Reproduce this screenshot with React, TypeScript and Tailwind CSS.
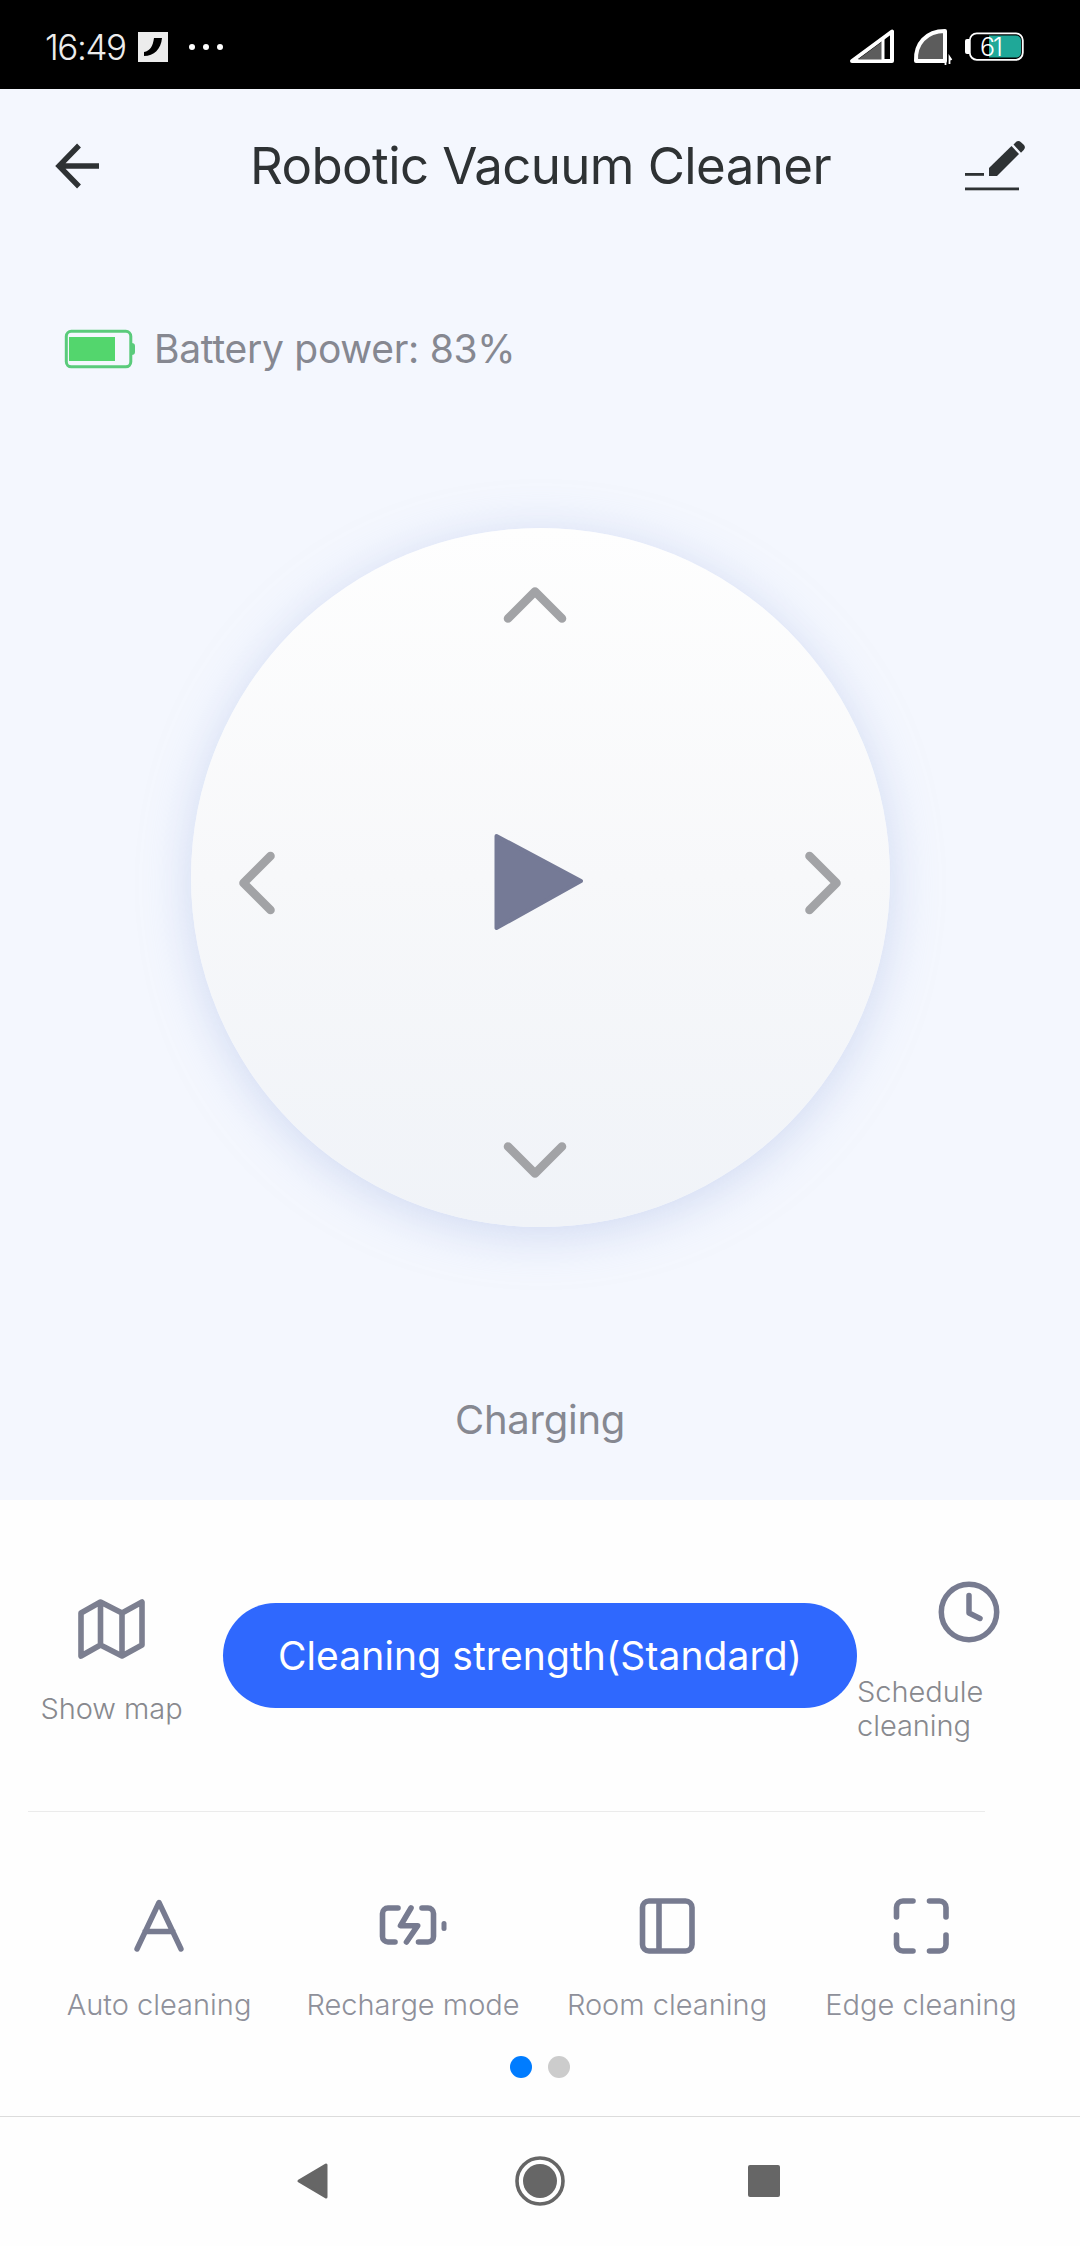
import React from 'react';

interface ModeItem {
  label: string;
  icon: React.ReactNode;
}

const modes: ModeItem[] = [
  {
    label: 'Auto cleaning',
    icon: (
      <svg width="68" height="68" viewBox="0 0 68 68" fill="none" stroke="#777b90" strokeWidth="5.4" strokeLinecap="round" strokeLinejoin="round">
        <path d="M12 57L34 10.5L56 57M20 39.5H48" />
      </svg>
    ),
  },
  {
    label: 'Recharge mode',
    icon: (
      <svg width="68" height="68" viewBox="0 0 68 68" fill="none" stroke="#777b90" strokeWidth="5.6" strokeLinecap="round" strokeLinejoin="round">
        <path d="M19 16H9a5.5 5.5 0 0 0-5.5 5.5v23A5.500 5.500 0 0 0 9 50h7" />
        <path d="M43 16h6a5.500 5.500 0 0 1 5.500 5.500v23a5.500 5.500 0 0 1-5.500 5.500H39.500" />
        <path d="M32 16L21.500 33.700H38.700L27.500 50" />
        <path d="M65 31.500v5" strokeWidth="5" />
      </svg>
    ),
  },
  {
    label: 'Room cleaning',
    icon: (
      <svg width="68" height="68" viewBox="0 0 68 68" fill="none" stroke="#777b90" strokeWidth="5.6">
        <rect x="9.500" y="9" width="49.500" height="50" rx="6.500" />
        <path d="M26 9v50" />
      </svg>
    ),
  },
  {
    label: 'Edge cleaning',
    icon: (
      <svg width="68" height="68" viewBox="0 0 68 68" fill="none" stroke="#777b90" strokeWidth="5.6" strokeLinecap="round">
        <path d="M9.500 25V15.500a6.500 6.500 0 0 1 6.500-6.500h10" />
        <path d="M42.500 9H52.500a6.500 6.500 0 0 1 6.500 6.500v9.500" />
        <path d="M9.500 43v9.500a6.500 6.500 0 0 0 6.500 6.500h10" />
        <path d="M42.500 59H52.500a6.500 6.500 0 0 0 6.500-6.500v-9.500" />
      </svg>
    ),
  },
];

const StatusBar: React.FC = () => (
  <div className="flex h-[89px] shrink-0 items-center justify-between bg-black pt-[5px] pr-[56px] pl-[45px]">
    <div className="flex items-center">
      <span className="w-[93px] text-[35px] leading-[40px] font-[350] tracking-[-1.4px] whitespace-nowrap text-[#ececec]">16:49</span>
      <svg width="30" height="30" viewBox="0 0 30 30">
        <rect width="30" height="30" fill="#ececec" />
        <path d="M16 6H24C23 17 16 24 6 24V20C12 19 15 14 16 6Z" fill="#000" />
      </svg>
      <div className="ml-[21px] flex gap-2">
        <span className="h-1.5 w-1.5 rounded-full bg-white" />
        <span className="h-1.5 w-1.5 rounded-full bg-white" />
        <span className="h-1.5 w-1.5 rounded-full bg-white" />
      </div>
    </div>

    <svg width="174" height="40" viewBox="0 0 174 40">
      <path d="M2 34L42 4.500V34Z" fill="#000" stroke="#fff" strokeWidth="4" strokeLinejoin="round" />
      <path d="M8 32.500L33 14V32.500Z" fill="#5c5c5c" />
      <path d="M33 11.500V34" stroke="#fff" strokeWidth="3" />
      <path d="M66 34C65 17 76 4 95 4V34Z" fill="#5c5c5c" stroke="#fff" strokeWidth="4" strokeLinejoin="round" />
      <path d="M95.500 32v6M99.500 37v-7l2 3" stroke="#fff" strokeWidth="1.800" fill="none" />
      <rect x="115" y="12" width="6" height="15" rx="2" fill="#fff" />
      <rect x="119.800" y="6.300" width="53" height="26.500" rx="7" fill="#000" stroke="#fff" strokeWidth="1.800" />
      <path d="M139 8.500H166a5 5 0 0 1 5 5V25.600a5 5 0 0 1-5 5H139Z" fill="#1fa898" />
      <text x="130" y="28.500" fontSize="25" fontWeight="300" letterSpacing="-2" fill="#fff">61</text>
    </svg>
  </div>
);

const Header: React.FC = () => (
  <header className="flex h-[154px] items-center justify-between px-[52px]">
    <svg width="50" height="50" viewBox="0 0 50 50" fill="none" stroke="#2e3234" strokeWidth="5.400">
      <path d="M27 4.500L7 25L27 45.500M7 25H47" />
    </svg>
    <h1 className="ml-[15px] text-[51px] leading-[60px] tracking-[-0.6px] whitespace-nowrap text-[#2e3234]">Robotic Vacuum Cleaner</h1>
    <svg width="64" height="54" viewBox="0 0 64 54" fill="#2e3234">
      <path d="M25 37V29L47.500 7L55 15L33 37Z" />
      <path d="M49.500 5.500L52 3Q54.500 0.800 57 3.300L60 6Q62 8.500 59.700 11L57 13.700Z" />
      <rect x="1" y="34" width="19" height="2.800" />
      <rect x="1" y="48.500" width="54" height="2.800" />
    </svg>
  </header>
);

const BatteryLevel: React.FC = () => (
  <div className="flex h-[60px] items-center px-[64px]">
    <svg width="72" height="40" viewBox="0 0 72 40">
      <rect x="2.300" y="2.300" width="64.500" height="35.500" rx="5" fill="none" stroke="#5acb7b" strokeWidth="3" />
      <path d="M67.500 14q3.500 0 3.500 3v6q0 3-3.500 3z" fill="#5acb7b" />
      <rect x="5" y="8" width="46" height="24" fill="#53d66d" />
    </svg>
    <span className="ml-[18px] text-[39px] leading-[48px] tracking-[-0.28px] whitespace-nowrap text-[#868891]">Battery power: 83%</span>
  </div>
);

const Chevron: React.FC<{ className?: string }> = ({ className }) => (
  <svg className={className} width="64" height="38" viewBox="0 0 64 38" fill="none" stroke="#a2a3a6" strokeWidth="8.600" strokeLinecap="round" strokeLinejoin="round">
    <path d="M5 32.500L32 5.500L59 32.500" />
  </svg>
);

const ControlPad: React.FC = () => (
  <div className="flex h-[699px] w-[699px] flex-col items-center justify-between rounded-full bg-gradient-to-b from-[#fefefe] via-[#f7f8fa] to-[#f0f3f8] pt-[58px] pr-[10px] pb-[48px] shadow-[0_7px_46px_2px_rgba(178,194,232,0.52)]">
    <Chevron />
    <div className="flex w-full items-center justify-between pr-[25px] pl-[34px]">
      <Chevron className="-rotate-90" />
      <svg className="-mt-0.5 mr-0.5" width="90" height="98" viewBox="0 0 90 98">
        <path d="M2.500 3L87 48L2.500 95Z" fill="#757a96" stroke="#757a96" strokeWidth="4" strokeLinejoin="round" />
      </svg>
      <Chevron className="rotate-90" />
    </div>
    <Chevron className="rotate-180" />
  </div>
);

const QuickActions: React.FC = () => (
  <section className="flex h-[311px] items-center">
    <div className="flex w-[223px] flex-col items-center pt-[12px]">
      <svg width="70" height="64" viewBox="0 0 70 64" fill="none" stroke="#7c7f90" strokeWidth="5.600" strokeLinejoin="round">
        <path d="M4 16L23.500 5L45 16L65 5V48L45 59L23.500 48L4 59ZM23.500 5V48M45 16V59" />
      </svg>
      <span className="mt-[30px] text-[29px] leading-[36px] font-[350] tracking-[-0.05px] text-[#88898e]">Show map</span>
    </div>
    <button className="h-[105px] w-[634px] rounded-full bg-[#2f68fe] text-[39px] leading-[48px] tracking-[0.1px] whitespace-nowrap text-white">
      Cleaning strength(Standard)
    </button>
    <div className="flex w-[223px] flex-col pt-[12px]">
      <svg className="ml-[81px]" width="62" height="62" viewBox="0 0 62 62" fill="none" stroke="#777b90" strokeWidth="5.500" strokeLinecap="round" strokeLinejoin="round">
        <circle cx="31" cy="31" r="27.700" />
        <path d="M31 14.500V32L42 37.500" />
      </svg>
      <span className="mt-[32px] w-[150px] text-[29px] leading-[34px] font-[350] tracking-[-0.05px] text-[#88898e]">Schedule cleaning</span>
    </div>
  </section>
);

const NavBar: React.FC = () => (
  <nav className="flex h-[130px] items-center justify-between border-t border-[#dcdcdc] pr-[300px] pb-0.5 pl-[296px]">
    <svg width="32" height="38" viewBox="0 0 32 38">
      <path d="M3 19L30 3V35Z" fill="#666" stroke="#666" strokeWidth="3" strokeLinejoin="round" />
    </svg>
    <svg className="ml-[3px]" width="50" height="50" viewBox="0 0 50 50" fill="#666">
      <circle cx="25" cy="25" r="23" fill="none" stroke="#666" strokeWidth="3.600" />
      <circle cx="25" cy="25" r="17" />
    </svg>
    <span className="h-8 w-8 rounded-xs bg-[#666]" />
  </nav>
);

const App: React.FC = () => {
  return (
    <div className="flex h-[2246px] w-[1080px] flex-col overflow-hidden bg-[#fefefe] font-['Inter','Roboto',sans-serif]">
      <StatusBar />
      <main className="flex h-[1411px] shrink-0 flex-col bg-[#f4f7fe]">
        <Header />
        <div className="pt-[76px]">
          <BatteryLevel />
        </div>
        <div className="flex justify-center pt-[149px]">
          <ControlPad />
        </div>
        <p className="mt-[169px] text-center text-[40px] leading-[48px] tracking-[-0.25px] text-[#868891]">Charging</p>
      </main>

      <QuickActions />
      <div className="ml-[28px] h-px w-[957px] shrink-0 bg-[#ebebeb]" />

      <section className="flex h-[304px] flex-col items-center px-8 pt-[80px]">
        <div className="grid w-full grid-cols-4">
          {modes.map((mode) => (
            <div key={mode.label} className="flex flex-col items-center">
              {mode.icon}
              <span className="mt-[27px] text-[29px] leading-[36px] font-[350] whitespace-nowrap text-[#8e909a]">{mode.label}</span>
            </div>
          ))}
        </div>
        <div className="mt-[33px] flex gap-4">
          <span className="h-[22px] w-[22px] rounded-full bg-[#007cff]" />
          <span className="h-[22px] w-[22px] rounded-full bg-[#ccc]" />
        </div>
      </section>

      <NavBar />
    </div>
  );
};

export default App;
